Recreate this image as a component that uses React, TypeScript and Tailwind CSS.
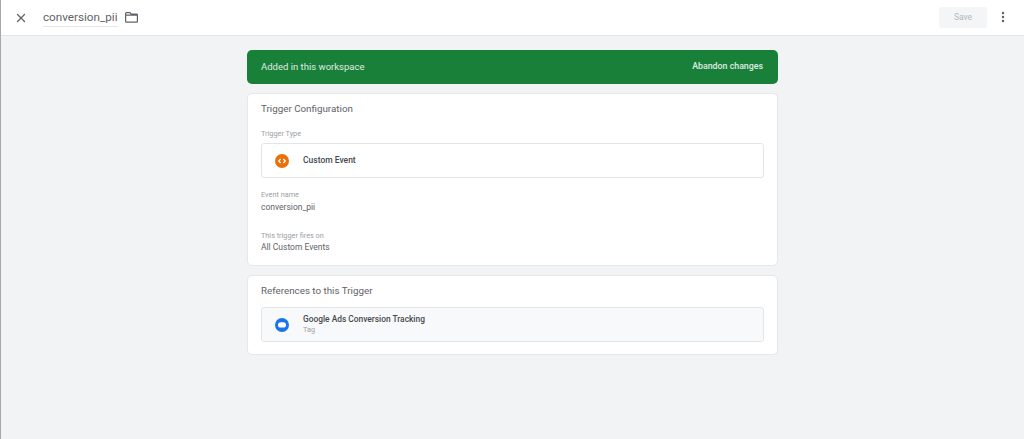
import { X, MoreVertical } from 'lucide-react';

function FolderIcon() {
  return (
    <svg width="13" height="11" viewBox="0 0 13 11" className="ml-[7px] text-[#5f6368]">
      <path d="M1.3.7H5l1.2 1.4h5.5c.4 0 .7.3.7.7v6.7c0 .4-.3.7-.7.7H1.3c-.4 0-.7-.3-.7-.7V1.4c0-.4.3-.7.7-.7Z M.6 3.2h11.8" fill="none" stroke="currentColor" strokeWidth="1.2" />
    </svg>
  );
}

function CustomEventIcon() {
  return (
    <svg width="14" height="14" viewBox="0 0 14 14">
      <circle cx="7" cy="7" r="7" fill="#e8710a" />
      <path d="M5.6 5 L3.7 7 L5.6 9 M8.4 5 L10.3 7 L8.4 9" fill="none" stroke="#fff" strokeWidth="1.2" />
    </svg>
  );
}

function AdsTagIcon() {
  return (
    <svg width="14" height="14" viewBox="0 0 14 14">
      <circle cx="7" cy="7" r="7" fill="#1a73e8" />
      <rect x="3" y="4.2" width="8" height="5.4" rx="2.7" fill="#fff" />
    </svg>
  );
}

export default function App() {
  return (
    <div className="min-h-[439px] bg-[#f1f3f4] border-l border-[#a6a8ab] font-['Roboto',sans-serif] text-[#3c4043] flex flex-col">
      <header className="h-[36px] bg-white border-b border-[#e6e7e8] flex items-center pl-[13px] pr-[14px]">
        <X size={14} strokeWidth={2.2} className="text-[#5f6368]" />
        <div className="ml-[15px] h-[19px] pt-[2px] flex items-center border-b border-[#e6e7e8] text-[11.7px] text-[#5f6368]">conversion_pii</div>
        <FolderIcon />
        <div className="ml-auto flex items-center">
          <div className="w-[48px] h-[21px] rounded-[3px] bg-[#f4f5f6] flex items-center justify-center text-[8.5px] text-[#b5b8bb]">Save</div>
          <MoreVertical size={14} strokeWidth={2.2} className="ml-[9px] -mt-[1px] text-[#5f6368]" />
        </div>
      </header>
      <main className="w-[531px] ml-[246px] pt-[14px] flex flex-col gap-[9px]">
        <div className="h-[34px] rounded-[5px] bg-[#188038] flex items-center justify-between pl-[14px] pr-[15px] text-white/85">
          <span className="text-[9.5px]">Added in this workspace</span>
          <span className="text-[8.8px] font-medium">Abandon changes</span>
        </div>
        <section className="h-[173px] rounded-[5px] bg-white border border-[#e6e7e9] px-[13px] pt-[8px]">
          <h2 className="text-[9.8px] leading-[13px] text-[#5f6368]">Trigger Configuration</h2>
          <div className="mt-[14px] text-[7.3px] leading-[9px] text-[#9aa0a6]">Trigger Type</div>
          <div className="mt-[5px] h-[35px] rounded-[3px] border border-[#e3e5e8] flex items-center pl-[13px]">
            <CustomEventIcon />
            <span className="ml-[14px] text-[8.5px] font-medium text-[#45494d]">Custom Event</span>
          </div>
          <div className="mt-[12px] text-[7.3px] leading-[9px] text-[#9aa0a6]">Event name</div>
          <div className="mt-[3px] text-[8.5px] leading-[11px] text-[#5f6368]">conversion_pii</div>
          <div className="mt-[18px] text-[7.3px] leading-[9px] text-[#9aa0a6]">This trigger fires on</div>
          <div className="mt-[2px] text-[8.5px] leading-[11px] text-[#5f6368]">All Custom Events</div>
        </section>
        <section className="h-[80px] rounded-[5px] bg-white border border-[#e6e7e9] px-[13px] pt-[8px]">
          <h2 className="text-[9.8px] leading-[13px] text-[#5f6368]">References to this Trigger</h2>
          <div className="mt-[10px] h-[35px] rounded-[3px] border border-[#e3e5e8] bg-[#f8f9fa] flex items-center pl-[13px]">
            <AdsTagIcon />
            <div className="ml-[14px] -mt-[2px]">
              <div className="text-[8.4px] leading-[11px] font-medium text-[#45494d]">Google Ads Conversion Tracking</div>
              <div className="text-[7.3px] leading-[9px] text-[#9aa0a6]">Tag</div>
            </div>
          </div>
        </section>
      </main>
    </div>
  );
}
